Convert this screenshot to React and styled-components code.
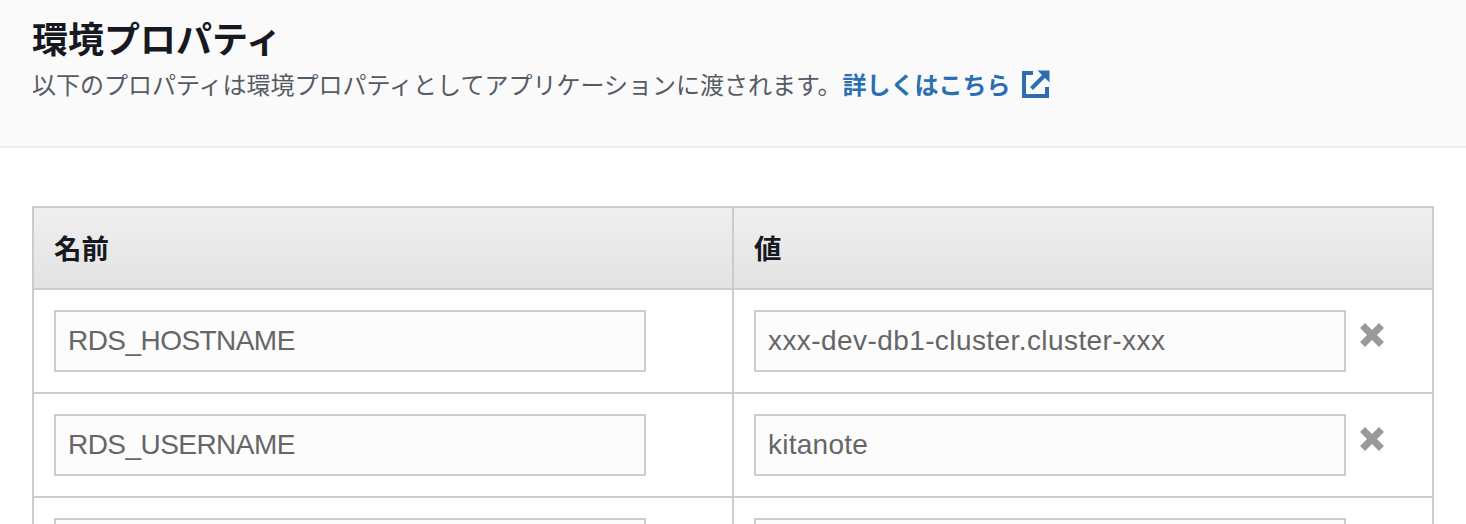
import React from "react";
import styled, { createGlobalStyle } from "styled-components";

const Global = createGlobalStyle`
  html, body { margin: 0; padding: 0; background: #fff; overflow: hidden; height: 524px; }
  * { box-sizing: border-box; }
`;
const JP = `"Noto Sans CJK JP", "Liberation Sans", sans-serif`;

const Page = styled.div`width: 1466px; height: 524px; overflow: hidden; background: #fff;`;
const Header = styled.header`
  height: 148px; background: #fafafa; border-bottom: 2px solid #eaeded;
  padding: 14px 32px 0; font-family: ${JP};
`;
const Title = styled.h2`
  margin: 0; font-size: 36px; line-height: 46px; font-weight: 700; color: #16191f;
`;
const Subtitle = styled.p`
  margin: 6px 0 0; font-size: 24px; line-height: 36px; color: #545b64;
  display: flex; align-items: center;
`;
const Link = styled.a`
  margin-left: 1px; color: #2a6fb3; font-weight: 700; font-size: 24px;
  display: inline-flex; align-items: center; gap: 11px; text-decoration: none;
`;
const Body = styled.div`padding: 58px 32px 0;`;
const Table = styled.div`
  width: 1402px; border: 2px solid #ccc; border-bottom: 0;
`;
const Row = styled.div`
  display: grid; grid-template-columns: 698px 700px; border-bottom: 2px solid #ccc;
`;
const HeadCell = styled.div`
  height: 80px; padding: 0 20px 3px; display: flex; align-items: center;
  font-family: ${JP}; font-size: 27.5px; font-weight: 700; color: #16191f;
  background: linear-gradient(#efefef, #e3e3e3);
  & + & { border-left: 2px solid #ccc; }
`;
const Cell = styled.div`
  height: 102px; padding: 20px 20px 0; display: flex; align-items: flex-start;
  & + & { border-left: 2px solid #ccc; }
`;
const Input = styled.div`
  width: 592px; height: 62px; flex: none; border: 2px solid #ccc; background: #fcfcfc;
  padding: 0 12px; display: flex; align-items: center;
  font-family: "Liberation Sans", sans-serif; font-size: 28px; color: #666;
  letter-spacing: ${(p) => p.$tracking || 0}px;
`;
const Remove = styled.button`
  border: 0; background: none; padding: 0; margin: 12px 0 0 13px; width: 26px; height: 26px;
  display: flex; cursor: pointer;
`;

const External = () => (
  <svg width="28" height="28" viewBox="0 0 28 28" fill="none" stroke="#2a6fb3" strokeWidth="4">
    <path d="M11 3H2v23h23v-9" />
    <path d="M9.5 18.5 23 5" />
    <path d="M15.5 0.5H27.5V12.5L15.5 0.5Z" fill="#2a6fb3" stroke="none" />
  </svg>
);
const Cross = () => (
  <svg width="26" height="26" viewBox="0 0 26 26" fill="none" stroke="#999">
    <path d="M6 6 20 20M20 6 6 20" strokeLinecap="square" strokeWidth="7" />
  </svg>
);

const rows = [
  { name: "RDS_HOSTNAME", value: "xxx-dev-db1-cluster.cluster-xxx", nt: -0.55, vt: 0.42 },
  { name: "RDS_USERNAME", value: "kitanote", nt: -0.55, vt: 0.25 },
  { name: "", value: "" },
];

export default function App() {
  return (
    <Page>
      <Global />
      <Header>
        <Title>環境プロパティ</Title>
        <Subtitle>
          以下のプロパティは環境プロパティとしてアプリケーションに渡されます。
          <Link href="#">詳しくはこちら <External /></Link>
        </Subtitle>
      </Header>
      <Body>
        <Table>
          <Row>
            <HeadCell>名前</HeadCell>
            <HeadCell>値</HeadCell>
          </Row>
          {rows.map((r, i) => (
            <Row key={i}>
              <Cell><Input $tracking={r.nt}>{r.name}</Input></Cell>
              <Cell><Input $tracking={r.vt}>{r.value}</Input><Remove aria-label="削除"><Cross /></Remove></Cell>
            </Row>
          ))}
        </Table>
      </Body>
    </Page>
  );
}
